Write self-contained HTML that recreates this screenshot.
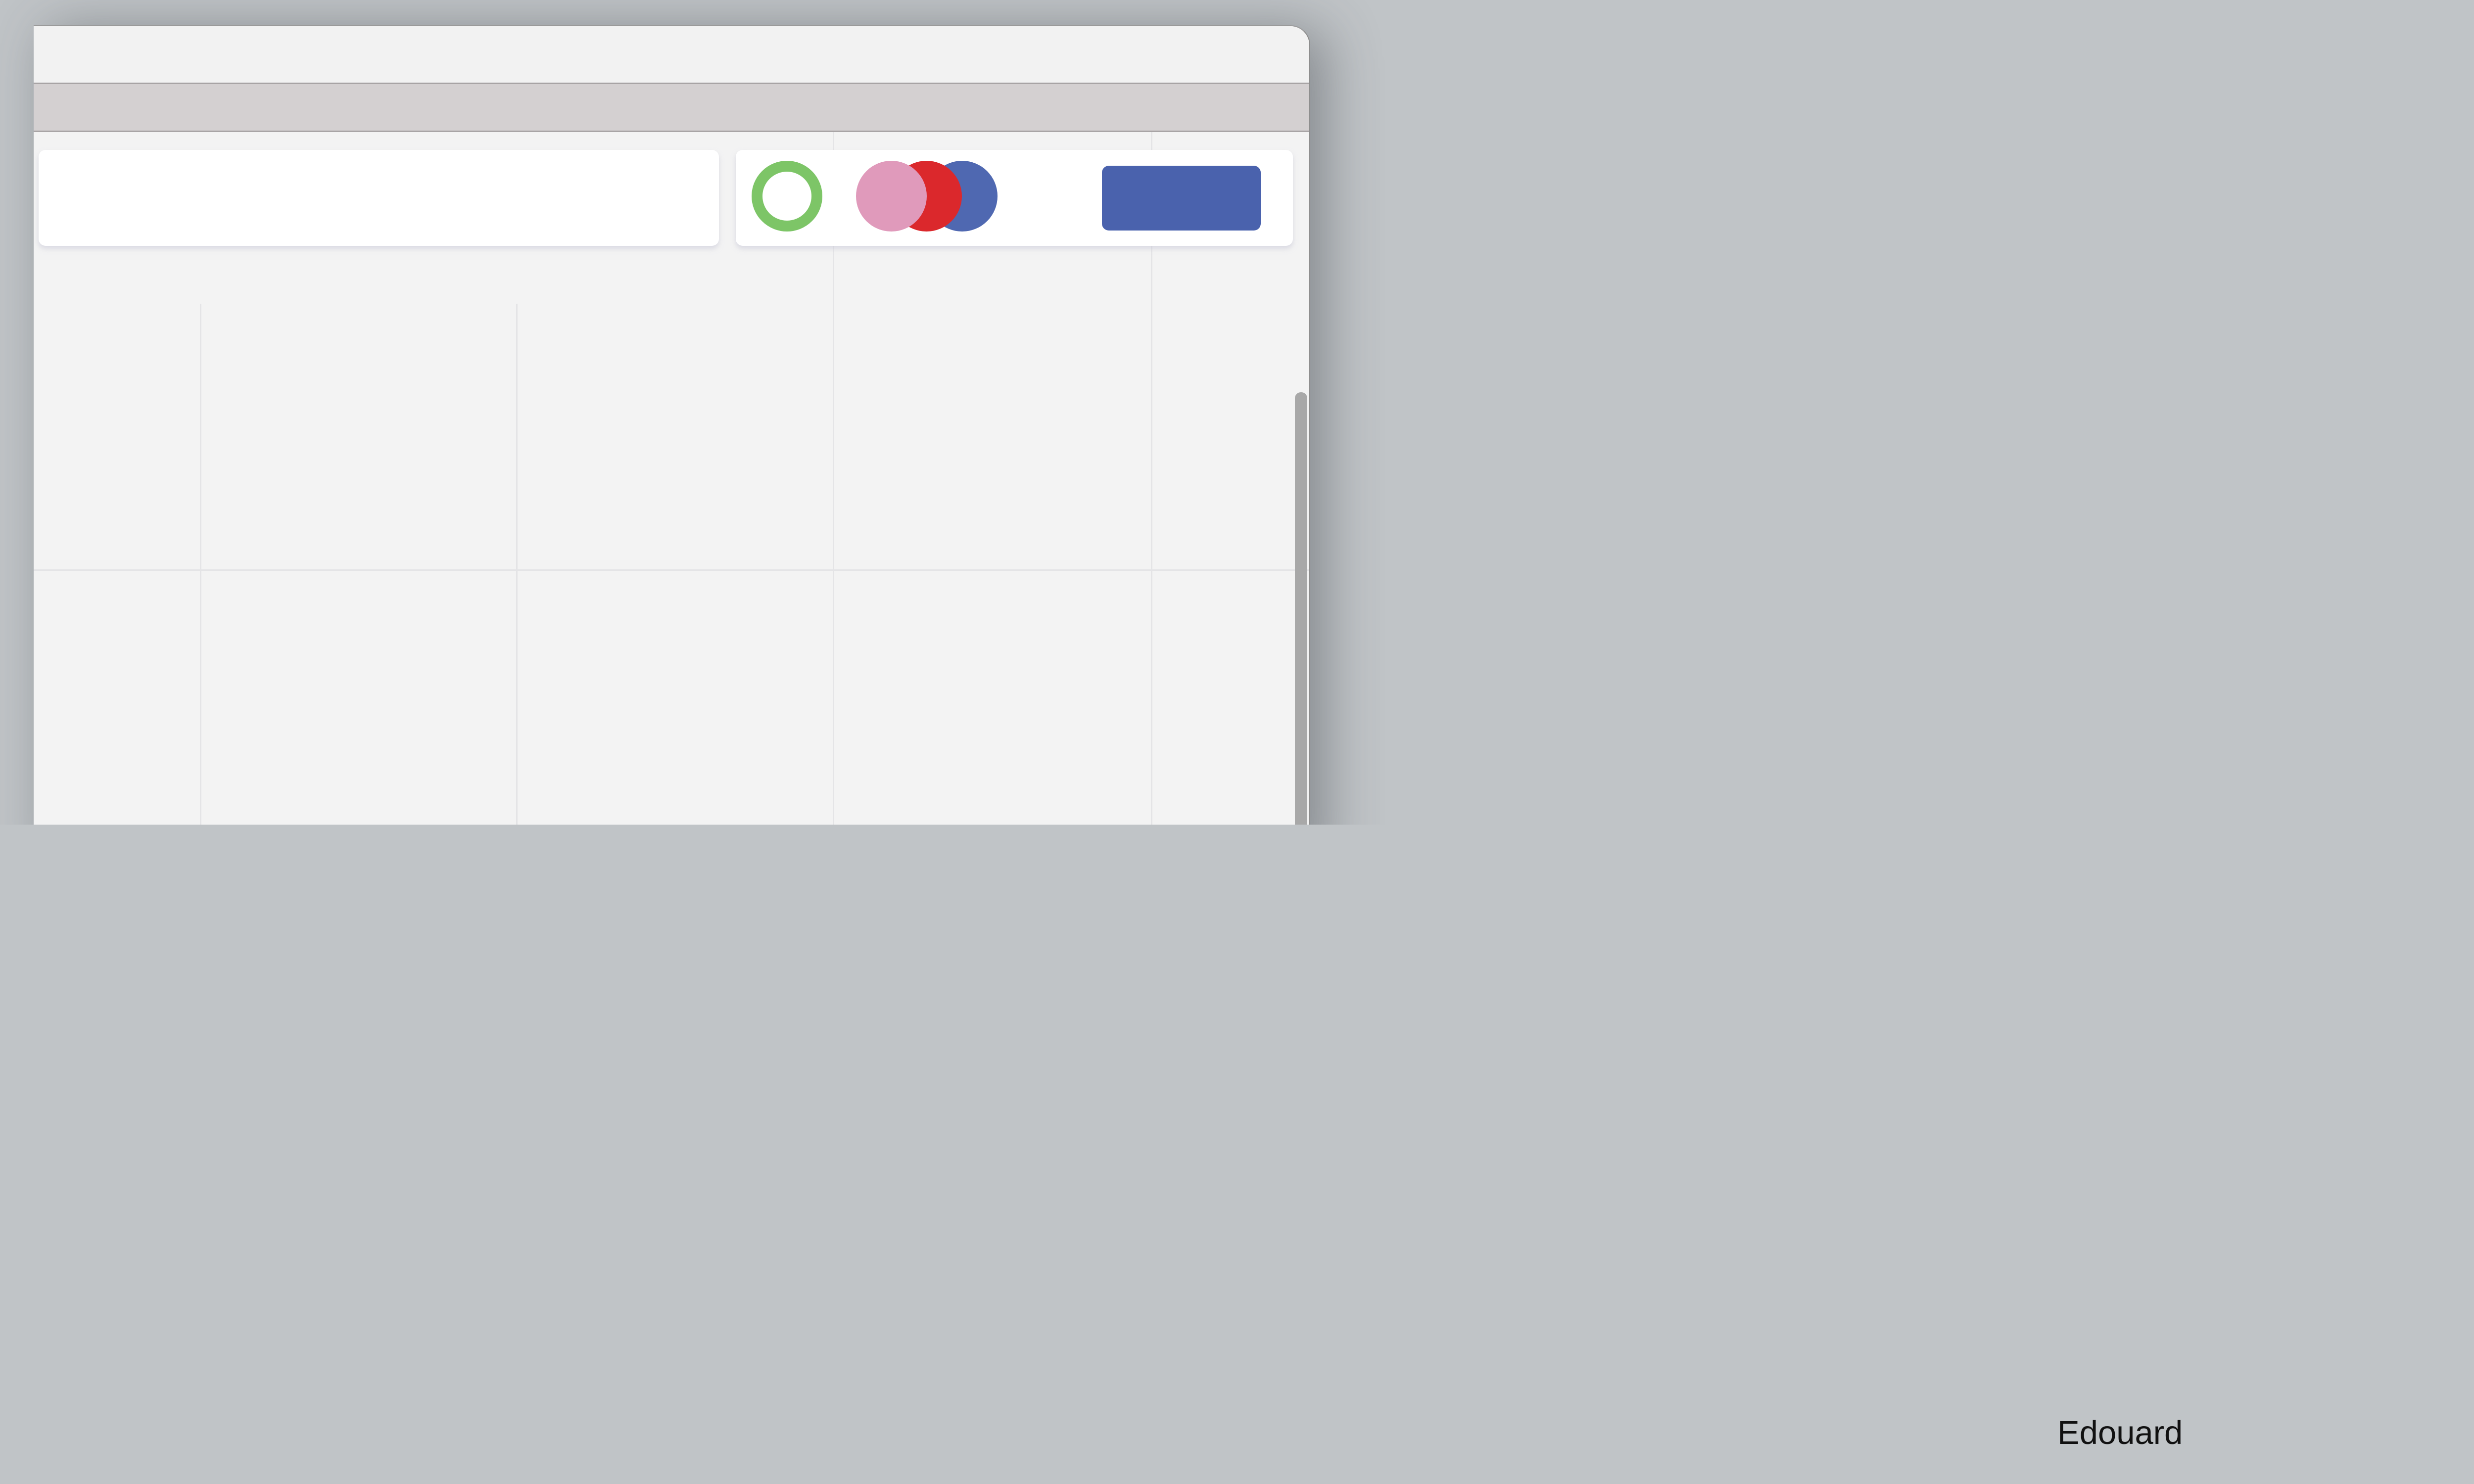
<!DOCTYPE html>
<html><head><meta charset="utf-8"><style>
html,body{margin:0;padding:0}
body{width:5334px;height:3000px;background:#c0c4c7;position:relative;overflow:hidden;font-family:"Liberation Sans",sans-serif}
.clip{position:absolute;left:0;top:0;width:3000px;height:1667px;overflow:hidden}
.win{position:absolute;left:68px;top:51px;width:2578px;height:1700px;background:#f3f3f3;border-top-right-radius:40px;border-right:2px solid #8e8e8e;border-top:2px solid #9a9a9a;box-shadow:30px 10px 110px rgba(60,65,70,0.45);overflow:hidden}
.tb{position:absolute;left:0;top:0;right:0;height:114px;background:#f2f2f2}
.band{position:absolute;left:0;top:114px;right:0;height:100px;background:#d4d0d1;border-top:3px solid #a8a4a5;border-bottom:3px solid #a8a4a5;box-sizing:border-box}
.v{position:absolute;width:3px;background:#e4e4e6}
.h{position:absolute;left:0;right:0;height:3px;background:#e4e4e6}
.card{position:absolute;background:#fff;border-radius:14px;box-shadow:0 6px 10px rgba(200,200,215,0.6)}
.c{position:absolute;width:143px;height:143px;border-radius:50%;top:272px}
.sb{position:absolute;left:2549px;top:740px;width:25px;height:1000px;background:#a8a8a8;border-radius:12px}
.name{position:absolute;left:4158px;top:2863px;font-size:67px;line-height:67px;color:#111;white-space:nowrap}
</style></head><body>
<div class="clip">
<div class="win">
<div class="tb"></div>
<div class="band"></div>
<div class="v" style="left:336px;top:561px;height:1200px"></div>
<div class="v" style="left:975px;top:561px;height:1200px"></div>
<div class="v" style="left:1615px;top:214px;height:1600px"></div>
<div class="v" style="left:2258px;top:214px;height:1600px"></div>
<div class="h" style="top:1098px"></div>
<div class="card" style="left:10px;top:250px;width:1375px;height:194px"></div>
<div class="card" style="left:1419px;top:250px;width:1126px;height:194px"></div>
<div class="c" style="left:1451px;box-sizing:border-box;border:22px solid #7dc567;background:#fff"></div>
<div class="c" style="left:1805px;background:#4f68b1"></div>
<div class="c" style="left:1733px;background:#db282c"></div>
<div class="c" style="left:1662px;background:#e09abb"></div>
<div style="position:absolute;left:2159px;top:282px;width:321px;height:131px;background:#4a62ad;border-radius:14px"></div>
<div class="sb"></div>
</div>
</div>
<div class="name">Edouard</div>
</body></html>
